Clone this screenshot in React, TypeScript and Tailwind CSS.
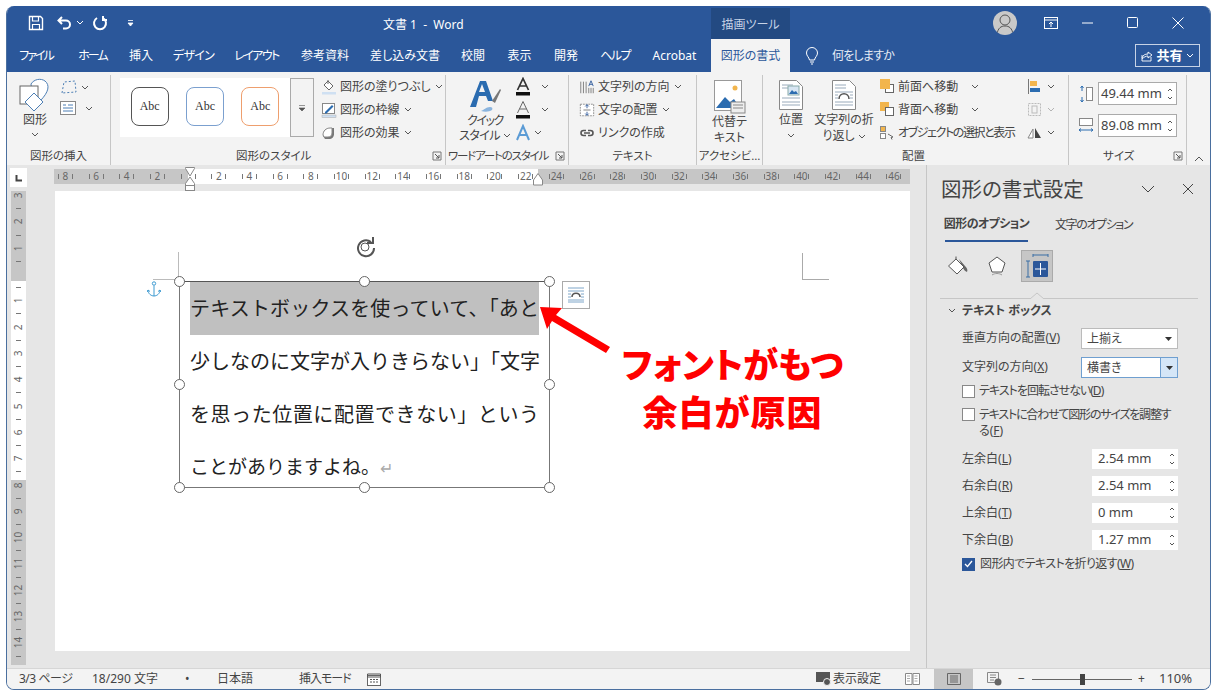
import React from "react";

const Chevron = ({ className = "" }: { className?: string }) => (
  <svg width="8" height="5" viewBox="0 0 8 5" className={`flex-none ${className}`}>
    <path d="M1 1l3 3 3-3" fill="none" stroke="#555" strokeWidth="1" />
  </svg>
);

const Launcher = () => (
  <svg width="10" height="10" viewBox="0 0 10 10" className="flex-none">
    <path d="M1 9V1h8v8z" fill="none" stroke="#777" />
    <path d="M3 3l4 4M7 4v3H4" fill="none" stroke="#555" />
  </svg>
);

const Group = ({
  width,
  label,
  labelClass = "justify-center",
  launcher = false,
  children,
}: {
  width: string;
  label: string;
  labelClass?: string;
  launcher?: boolean;
  children: React.ReactNode;
}) => (
  <div className={`flex flex-none flex-col border-r border-[#c6c6c6] ${width}`}>
    <div className="flex h-[72px] flex-none">{children}</div>
    <div className={`flex h-[18px] items-center whitespace-nowrap text-[11.5px] ${labelClass}`}>
      <span>{label}</span>
      {launcher && (
        <span className="ml-auto mr-[3px]">
          <Launcher />
        </span>
      )}
    </div>
  </div>
);

const Row = ({
  icon,
  label,
  chevron = true,
  className = "",
}: {
  icon: React.ReactNode;
  label: string;
  chevron?: boolean;
  className?: string;
}) => (
  <div className={`flex h-[23px] items-center whitespace-nowrap text-[12px] ${className}`}>
    <span className="mr-[3px] flex w-[16px] flex-none justify-center">{icon}</span>
    <span>{label}</span>
    {chevron && <Chevron className="ml-[4px]" />}
  </div>
);

const Spin = () => (
  <svg width="8" height="14" viewBox="0 0 8 14" className="flex-none">
    <path d="M2 4l2-2 2 2M2 10l2 2 2-2" fill="none" stroke="#555" />
  </svg>
);

const FillIcon = () => (
  <svg width="16" height="16" viewBox="0 0 16 16">
    <path d="M7 2l5 5-4 4-5-5z" fill="#fff" stroke="#666" />
    <path d="M7 1v4" stroke="#666" />
    <rect x="1" y="13" width="14" height="2.5" fill="#cfe0f2" />
  </svg>
);

const PenIcon = () => (
  <svg width="16" height="16" viewBox="0 0 16 16">
    <rect x="1.5" y="1.5" width="12" height="10" fill="#fff" stroke="#888" />
    <path d="M4 10l7-7 1.5 1.5-7 7H4z" fill="#2b6cb0" />
    <rect x="1" y="13" width="14" height="2.5" fill="#cfe0f2" stroke="#aaa" strokeWidth=".5" />
  </svg>
);

const EffectIcon = () => (
  <svg width="16" height="16" viewBox="0 0 16 16">
    <path d="M2 11c0-5 3-8 8-8h3v6c0 3-2 5-5 5H4z" fill="#777" />
    <path d="M2 10c0-4 3-7 7-7h2v5c0 3-2 4-4 4H3z" fill="#fff" stroke="#888" />
  </svg>
);

const TextA = ({ bar, outline = false }: { bar: string; outline?: boolean }) => (
  <svg width="18" height="20" viewBox="0 0 18 20">
    <path
      d="M3.5 13L9 1.5 14.5 13M5.5 9h7"
      fill="none"
      stroke={outline ? "#666" : "#333"}
      strokeWidth={outline ? 1 : 1.7}
    />
    <rect x="2" y="15" width="14" height="3.5" fill={bar} />
  </svg>
);

const DirIcon = () => (
  <svg width="18" height="18" viewBox="0 0 18 18">
    <path d="M2 3v13M5 3v13M8 3v13" stroke="#777" />
    <path d="M11 8l2.5-6L16 8M12 6h3" fill="none" stroke="#2b579a" />
    <path d="M11 10v6M16 10v6M13.500 10v6" stroke="#777" />
  </svg>
);

const AlignIcon = () => (
  <svg width="18" height="18" viewBox="0 0 18 18">
    <rect x="1.500" y="2.500" width="15" height="13" fill="#fff" stroke="#888" strokeDasharray="2 1" />
    <path d="M9 3v4M7 5l2-2 2 2M9 15v-4M7 13l2 2 2-2" fill="none" stroke="#2b579a" />
    <path d="M5 9h8" stroke="#777" />
  </svg>
);

const LinkIcon = () => (
  <svg width="16" height="10" viewBox="0 0 16 10">
    <path d="M7 2.500H4.500a2.500 2.500 0 000 5H7M9 2.500h2.500a2.500 2.500 0 010 5H9M5 5h6" fill="none" stroke="#555" strokeWidth="1.600" />
  </svg>
);

const PageIcon = ({ wrap = false }: { wrap?: boolean }) => (
  <svg width="24" height="30" viewBox="0 0 24 30">
    <path d="M.5.500h17l6 6v23H.5z" fill="#fff" stroke="#888" />
    <path d="M3 5h11M3 8h11M3 25h18M3 22h18" stroke="#9ab" />
    {wrap ? (
      <>
        <path d="M3 12h18M3 15h3M18 15h3M3 18h3M18 18h3" stroke="#9ab" />
        <path d="M7 19c0-7 10-7 10 0" fill="none" stroke="#555" strokeWidth="1.500" />
      </>
    ) : (
      <>
        <rect x="9" y="6" width="11" height="9" fill="#d8e6f3" stroke="#8aa" />
        <path d="M10 14l3-4 2 2 2-1 2 3z" fill="#2b6cb0" />
        <path d="M3 18h18" stroke="#9ab" />
      </>
    )}
  </svg>
);

const FrontIcon = ({ back = false }: { back?: boolean }) => (
  <svg width="15" height="15" viewBox="0 0 15 15" className="flex-none">
    {back ? (
      <>
        <rect x="0" y="0" width="9" height="9" fill="#f2b54d" />
        <rect x="5.500" y="5.500" width="8" height="8" fill="#fff" stroke="#666" />
      </>
    ) : (
      <>
        <rect x="5.500" y="5.500" width="8" height="8" fill="#fff" stroke="#666" />
        <rect x="0" y="0" width="10" height="10" fill="#f2b54d" />
      </>
    )}
  </svg>
);

const Section = () => (
  <svg width="15" height="15" viewBox="0 0 15 15" className="flex-none">
    <rect x=".5" y="1.500" width="5" height="5" fill="#f2b54d" stroke="#888" />
    <rect x=".5" y="8.500" width="5" height="5" fill="#fff" stroke="#888" />
    <path d="M8 9l5 3-2 .5 1 2" fill="#fff" stroke="#666" />
  </svg>
);

const HandleDot = ({ className }: { className: string }) => (
  <div className={`absolute h-[11px] w-[11px] rounded-full border-[1.5px] border-[#666] bg-white ${className}`} />
);

const Pane = ({ children }: { children: React.ReactNode }) => (
  <div className="flex h-[20px] w-[216px] items-center justify-between">{children}</div>
);

const NumField = ({ label, u, tail, value }: { label: string; u: string; tail: string; value: string }) => (
  <div className="mt-[7px] ml-[35px]">
    <Pane>
      <span className="whitespace-nowrap text-[12px]">
        {label}(<span className="underline">{u}</span>){tail}
      </span>
      <span className="flex h-[20px] w-[86px] items-center justify-between bg-white pl-[6px] pr-[2px] text-[13px]">
        {value}
        <Spin />
      </span>
    </Pane>
  </div>
);

const hTicks: (number | null)[] = [8, 6, 4, 2, null];
for (let n = 2; n <= 46; n += 2) hTicks.push(n);

const vCells: (number | null | "t")[] = [];
for (let n = -3; n <= 14; n++) {
  vCells.push(n === 0 ? null : Math.abs(n));
  vCells.push("t");
}

const tabs = [
  { t: "ファイル", w: "w-[34px] mr-[3px] tracking-[-2px]" },
  { t: "ホーム", w: "w-[29px] tracking-[-2px]" },
  { t: "挿入", w: "w-[24px]" },
  { t: "デザイン", w: "w-[37px] tracking-[-0.7px]" },
  { t: "レイアウト", w: "w-[45px] tracking-[-1.6px]" },
  { t: "参考資料", w: "w-[48px]" },
  { t: "差し込み文書", w: "w-[68px]" },
  { t: "校閲", w: "w-[24px]" },
  { t: "表示", w: "w-[25px]" },
  { t: "開発", w: "w-[24px]" },
  { t: "ヘルプ", w: "w-[30px] tracking-[-1.6px]" },
  { t: "Acrobat", w: "w-[45px]" },
];

const App: React.FC = () => {
  return (
    <div className="h-[698px] w-[1218px] overflow-hidden bg-white pl-[6px] pt-[6px] font-['Noto_Sans','Noto_Sans_CJK_JP',sans-serif] text-[#444] [font-feature-settings:'palt']">
      <div className="flex h-[684px] w-[1205px] flex-col overflow-hidden rounded-t-[8px] rounded-b-[8px] border-x border-b border-[#4a6f9f] bg-[#e6e6e6]">
        {/* title bar */}
        <div className="flex h-[33px] flex-none items-center bg-[#2b579a] text-white">
          <svg width="16" height="16" viewBox="0 0 16 16" className="ml-[21px] flex-none">
            <path d="M1.500 1.500h11l2 2v11h-13z" fill="none" stroke="#fff" strokeWidth="1.400" />
            <path d="M4.500 2v4h6V2M4.500 14V9.500h7V14" fill="none" stroke="#fff" strokeWidth="1.200" />
          </svg>
          <svg width="18" height="16" viewBox="0 0 18 16" className="ml-[12px] flex-none">
            <path d="M6 2L2.500 5.500 6 9M3 5.500h7a4 4 0 010 8H7" fill="none" stroke="#fff" strokeWidth="2" />
          </svg>
          <svg width="8" height="5" viewBox="0 0 8 5" className="ml-[2px] flex-none">
            <path d="M1 1l3 3 3-3" fill="none" stroke="#fff" />
          </svg>
          <svg width="16" height="16" viewBox="0 0 16 16" className="ml-[8px] flex-none">
            <path d="M5 3a6 6 0 106 0M11 1v4h4" fill="none" stroke="#fff" strokeWidth="2" />
          </svg>
          <svg width="7" height="8" viewBox="0 0 7 8" className="ml-[19px] flex-none">
            <path d="M1 1.500h5M1 4l2.500 3L6 4z" fill="#fff" stroke="#fff" strokeWidth=".8" />
          </svg>
          <span className="ml-[249px] mt-[5px] w-[88px] flex-none whitespace-nowrap text-[12px]">文書 1 &nbsp;-&nbsp; Word</span>
          <div className="ml-[240px] mt-[2px] flex h-[31px] w-[79px] flex-none items-center justify-center bg-[#234a82] pt-[2px] text-[12px] text-[#c7d3e6]">
            描画ツール
          </div>
          <div className="ml-[203px] flex h-[24px] w-[24px] flex-none items-center justify-center overflow-hidden rounded-full bg-[#c9c9c9]">
            <svg width="20" height="22" viewBox="0 0 20 22">
              <circle cx="10" cy="8" r="5" fill="none" stroke="#555" />
              <path d="M2 22c1-6 4-8 8-8s7 2 8 8" fill="none" stroke="#555" />
            </svg>
          </div>
          <svg width="14" height="12" viewBox="0 0 14 12" className="ml-[27px] flex-none">
            <rect x=".5" y=".5" width="13" height="11" fill="none" stroke="#fff" />
            <path d="M.5 3h13M7 10V5M5 7l2-2 2 2" fill="none" stroke="#fff" />
          </svg>
          <svg width="11" height="2" viewBox="0 0 11 2" className="ml-[24px] flex-none">
            <path d="M0 1h11" stroke="#fff" />
          </svg>
          <svg width="11" height="11" viewBox="0 0 11 11" className="ml-[34px] flex-none">
            <rect x=".5" y=".5" width="10" height="10" rx="1" fill="none" stroke="#fff" />
          </svg>
          <svg width="12" height="12" viewBox="0 0 12 12" className="ml-[34px] flex-none">
            <path d="M.5.500l11 11M11.500.500l-11 11" stroke="#fff" />
          </svg>
        </div>

        {/* tabs */}
        <div className="flex h-[33px] flex-none items-center bg-[#2b579a] pl-[12px] text-[12px] text-white">
          <div className="flex gap-[22px]">
            {tabs.map((tab) => (
              <span key={tab.t} className={`flex flex-none justify-center whitespace-nowrap ${tab.w}`}>
                {tab.t}
              </span>
            ))}
          </div>
          <div className="ml-[14px] flex h-full w-[79px] flex-none items-center justify-center bg-[#f3f3f3] text-[#2b579a]">
            図形の書式
          </div>
          <svg width="14" height="18" viewBox="0 0 14 18" className="ml-[15px] flex-none">
            <path d="M4.500 13C4 10 1.500 9 1.500 6a5.500 5.500 0 0111 0c0 3-2.500 4-3 7zM5 15h4M6 17h2" fill="none" stroke="#fff" />
          </svg>
          <span className="ml-[13px] w-[57px] flex-none whitespace-nowrap tracking-[-0.8px] text-[#e6ecf5]">何をしますか</span>
          <div className="ml-[246px] flex h-[23px] w-[65px] flex-none items-center justify-center gap-[3px] border border-[#c7d3e6] text-[13px] font-bold">
            <svg width="12" height="12" viewBox="0 0 12 12" className="flex-none">
              <path d="M1 5v6h9V7M1 8c1-3 3-4 6-4V2l4 3-4 3V6C5 6 3 7 1 9" fill="none" stroke="#fff" strokeWidth=".9" />
            </svg>
            共有
            <svg width="8" height="5" viewBox="0 0 8 5" className="flex-none">
              <path d="M1 1l3 3 3-3" fill="none" stroke="#fff" />
            </svg>
          </div>
        </div>

        {/* ribbon */}
        <div className="flex h-[93px] flex-none items-start bg-[#f3f3f3] pt-[3px]">
          <Group width="w-[104px]" label="図形の挿入">
            <div className="flex w-[46px] flex-none flex-col items-center pl-[10px] pt-[3px] text-[12px]">
              <svg width="32" height="36" viewBox="0 0 32 36" className="flex-none">
                <path d="M12 6c3-5 10-6 14-3 5 4 4 11-5 20l-8-8z" fill="#fff" stroke="#4d7fb5" />
                <rect x="1" y="8" width="18" height="18" fill="#fff" stroke="#666" />
                <path d="M15 15l9 9-9 9-9-9z" fill="#fff" stroke="#4d7fb5" />
              </svg>
              <span className="-mt-[1px] whitespace-nowrap leading-[14px]">図形</span>
              <Chevron className="mt-[5px]" />
            </div>
            <div className="ml-[7px] flex flex-col gap-[5px] pt-[4px]">
              <div className="flex items-center gap-[3px]">
                <svg width="18" height="17" viewBox="0 0 18 17">
                  <path d="M2 14L4 3l11-1 1 11z" fill="none" stroke="#4d7fb5" strokeDasharray="2 2" />
                </svg>
                <Chevron />
              </div>
              <div className="flex items-center gap-[9px]">
                <svg width="16" height="14" viewBox="0 0 16 14">
                  <rect x=".5" y=".5" width="15" height="13" fill="#fff" stroke="#888" />
                  <path d="M3 4h3M8 4h5M3 7h10M3 10h10" stroke="#4d7fb5" />
                </svg>
                <Chevron />
              </div>
            </div>
          </Group>

          <Group width="w-[335px]" label="図形のスタイル" labelClass="pl-[125px]" launcher>
            <div className="ml-[9px] mt-[3px] flex h-[59px] flex-none">
              <div className="flex w-[170px] items-start justify-around bg-white px-[2px] pt-[9px] font-['Liberation_Serif',serif] text-[12px] text-[#333]">
                <span className="flex h-[39px] w-[38px] items-center justify-center rounded-[8px] border-[1.5px] border-[#555] pb-[2px]">Abc</span>
                <span className="flex h-[39px] w-[38px] items-center justify-center rounded-[8px] border-[1.5px] border-[#7ba0cf] pb-[2px]">Abc</span>
                <span className="flex h-[39px] w-[38px] items-center justify-center rounded-[8px] border-[1.5px] border-[#ee9f6e] pb-[2px]">Abc</span>
              </div>
              <div className="flex w-[24px] items-center justify-center border border-[#aaa] bg-[#f3f3f3]">
                <svg width="8" height="8" viewBox="0 0 8 8">
                  <path d="M1 1.500h6M1 4l3 3 3-3z" fill="#555" stroke="#555" strokeWidth=".6" />
                </svg>
              </div>
            </div>
            <div className="ml-[7px] flex flex-col pt-[0px]">
              <Row icon={<FillIcon />} label="図形の塗りつぶし" />
              <Row icon={<PenIcon />} label="図形の枠線" />
              <Row icon={<EffectIcon />} label="図形の効果" />
            </div>
          </Group>

          <Group width="w-[123px]" label="ワードアートのスタイル" labelClass="pl-[2px] tracking-[-1.2px]" launcher>
            <div className="ml-[14px] flex w-[50px] flex-none flex-col items-center pt-[4px] text-[12px] leading-[15px]">
              <svg width="36" height="36" viewBox="0 0 36 36" className="flex-none">
                <path d="M3 28L13 2h6l7 20h-5l-2-5h-7l-3 11zM12 13h6l-3-8z" fill="#2b6cb0" />
                <path d="M25 22l8-12 1 1-6 13z" fill="#777" />
                <path d="M14 32c3-1 5-4 9-4 2 0 3 1 2 3-3 2-7 2-11 1z" fill="#8ab4de" />
              </svg>
              <span className="-mt-[2px] whitespace-nowrap tracking-[-1.5px]">クイック</span>
              <span className="flex items-center gap-[3px] whitespace-nowrap tracking-[-0.6px]">
                スタイル <Chevron />
              </span>
            </div>
            <div className="ml-[4px] flex flex-col">
              <div className="flex h-[23px] items-center gap-[9px]"><TextA bar="#111" /><Chevron /></div>
              <div className="flex h-[23px] items-center gap-[9px]"><TextA bar="#111" outline /><Chevron /></div>
              <div className="flex h-[23px] items-center gap-[2px]">
                <svg width="18" height="18" viewBox="0 0 18 18">
                  <path d="M3 16L9 2l6 14M6 11h6" fill="none" stroke="#5b9bd5" strokeWidth="2" />
                </svg>
                <Chevron />
              </div>
            </div>
          </Group>

          <Group width="w-[128px]" label="テキスト">
            <div className="ml-[10px] flex flex-col">
              <Row icon={<DirIcon />} label="文字列の方向" />
              <Row icon={<AlignIcon />} label="文字の配置" />
              <Row icon={<LinkIcon />} label="リンクの作成" chevron={false} />
            </div>
          </Group>

          <Group width="w-[66px]" label="アクセシビ…">
            <div className="flex w-full flex-col items-center pt-[5px] text-[12px] leading-[16px]">
              <svg width="32" height="36" viewBox="0 0 32 36" className="flex-none">
                <rect x=".5" y=".5" width="27" height="30" fill="#fff" stroke="#999" />
                <circle cx="21" cy="8" r="2.500" fill="#f2b54d" />
                <path d="M2 28l9-11 5 5 4-3 6 9z" fill="#2b6cb0" />
                <rect x="17" y="22" width="14" height="11" fill="#eee" stroke="#888" />
                <path d="M19 25h10M19 28h10" stroke="#888" />
              </svg>
              <span className="-mt-[2px] whitespace-nowrap">代替テ</span>
              <span className="whitespace-nowrap">キスト</span>
            </div>
          </Group>

          <Group width="w-[306px]" label="配置" labelClass="justify-center pr-[4px]">
            <div className="ml-[8px] flex w-[40px] flex-none flex-col items-center pt-[5px] text-[12px]">
              <PageIcon />
              <span className="mt-[2px] whitespace-nowrap leading-[16px]">位置</span>
              <Chevron className="mt-[5px]" />
            </div>
            <div className="ml-[4px] flex w-[58px] flex-none flex-col items-center pt-[5px] text-[12px] leading-[16px]">
              <PageIcon wrap />
              <span className="mt-[2px] whitespace-nowrap">文字列の折</span>
              <span className="flex items-center gap-[3px] whitespace-nowrap">
                り返し <Chevron />
              </span>
            </div>
            <div className="ml-[7px] flex w-[134px] flex-none flex-col">
              <div className="flex h-[23px] items-center whitespace-nowrap text-[12px]">
                <FrontIcon />
                <span className="ml-[3px] w-[73px] flex-none">前面へ移動</span>
                <Chevron />
              </div>
              <div className="flex h-[23px] items-center whitespace-nowrap text-[12px]">
                <FrontIcon back />
                <span className="ml-[3px] w-[73px] flex-none">背面へ移動</span>
                <Chevron />
              </div>
              <div className="flex h-[23px] items-center whitespace-nowrap text-[12px]">
                <Section />
                <span className="ml-[3px] tracking-[-1.4px]">オブジェクトの選択と表示</span>
              </div>
            </div>
            <div className="ml-[13px] flex flex-col">
              <div className="flex h-[23px] items-center gap-[5px]">
                <svg width="15" height="15" viewBox="0 0 15 15">
                  <path d="M1.500 0v15" stroke="#777" />
                  <rect x="3" y="2" width="7" height="5" fill="#f2b54d" />
                  <rect x="3" y="9" width="10" height="4" fill="#2b6cb0" />
                </svg>
                <Chevron />
              </div>
              <div className="flex h-[23px] items-center gap-[5px]">
                <svg width="15" height="15" viewBox="0 0 15 15">
                  <rect x="1.500" y="1.500" width="12" height="12" fill="none" stroke="#bbb" strokeDasharray="2 1" />
                  <rect x="5" y="4" width="5" height="7" fill="none" stroke="#bbb" />
                </svg>
                <Chevron className="opacity-40" />
              </div>
              <div className="flex h-[23px] items-center gap-[5px]">
                <svg width="15" height="15" viewBox="0 0 15 15">
                  <path d="M6 13H1l5-9z" fill="#fff" stroke="#888" />
                  <path d="M8 13h6L8 3z" fill="#444" />
                </svg>
                <Chevron />
              </div>
            </div>
          </Group>

          <Group width="w-[118px]" label="サイズ" labelClass="pl-[34px]" launcher>
            <div className="ml-[9px] flex flex-col gap-[9px] pt-[7px]">
              <div className="flex items-center gap-[4px]">
                <svg width="16" height="20" viewBox="0 0 16 20" className="flex-none">
                  <rect x="8.500" y="3.500" width="6" height="13" fill="#fff" stroke="#888" />
                  <path d="M4 2v5M2.500 4L4 2l1.500 2M4 18v-5M2.500 16L4 18l1.500-2" fill="none" stroke="#2b6cb0" />
                </svg>
                <div className="flex h-[23px] w-[79px] items-center justify-between border border-[#aaa] bg-white pl-[2px] pr-[2px] text-[13px] whitespace-nowrap">
                  49.44 mm
                  <Spin />
                </div>
              </div>
              <div className="flex items-center gap-[4px]">
                <svg width="16" height="20" viewBox="0 0 16 20" className="flex-none">
                  <rect x="1.500" y="2.500" width="13" height="7" fill="#fff" stroke="#888" />
                  <path d="M1 14h14M1 14l2-1.500M1 14l2 1.500M15 14l-2-1.500M15 14l-2 1.500" fill="none" stroke="#2b6cb0" />
                </svg>
                <div className="flex h-[23px] w-[79px] items-center justify-between border border-[#aaa] bg-white pl-[2px] pr-[2px] text-[13px] whitespace-nowrap">
                  89.08 mm
                  <Spin />
                </div>
              </div>
            </div>
          </Group>
          <div className="flex h-[90px] flex-1 items-end justify-center pb-[3px]">
            <svg width="10" height="6" viewBox="0 0 10 6">
              <path d="M1 5l4-4 4 4" fill="none" stroke="#555" />
            </svg>
          </div>
        </div>

        {/* work area */}
        <div className="flex min-h-0 flex-1">
          <div className="w-[920px] flex-none border-r border-[#c6c6c6]">
            <div className="relative flex items-start pt-[3px]">
              <div className="ml-[3px] flex h-[19px] w-[17px] flex-none items-center justify-center bg-white">
                <svg width="8" height="8" viewBox="0 0 8 8">
                  <path d="M1.500 1v5.500H7" fill="none" stroke="#444" strokeWidth="2" />
                </svg>
              </div>
              <div className="ml-[27px] mt-[1px] flex h-[15px] w-[856px] flex-none items-center overflow-hidden bg-[linear-gradient(to_right,#c6c6c6_134px,#fff_134px,#fff_484px,#c6c6c6_484px)] text-[10px] text-[#666]">
                <div className="-ml-[4px] flex flex-none">
                  {hTicks.map((n, i) => (
                    <div key={i} className="flex w-[30.7px] flex-none justify-center">
                      <div className="flex w-[15px] items-center justify-between">
                        <span className="h-[5px] w-[1px] flex-none bg-[#777]" />
                        <span className="flex w-0 justify-center">{n}</span>
                        <span className="h-[5px] w-[1px] flex-none bg-[#777]" />
                      </div>
                    </div>
                  ))}
                </div>
              </div>
              {/* indent markers */}
              <svg width="10" height="24" viewBox="0 0 10 24" className="absolute left-[178px] top-[2px]">
                <path d="M.5.500h9v1L5 9 .5 1.500z" fill="#fff" stroke="#888" />
                <path d="M5 10l4.500 6.500v2h-9v-2z" fill="#fff" stroke="#888" />
                <rect x=".5" y="18.500" width="9" height="5" fill="#fff" stroke="#888" />
              </svg>
              <svg width="10" height="13" viewBox="0 0 10 13" className="absolute left-[526px] top-[8px]">
                <path d="M5 .5l4.500 6.500v5h-9V7z" fill="#fff" stroke="#888" />
              </svg>
            </div>
            <div className="mt-[4px] flex items-start">
              <div className="ml-[4px] flex h-[474px] w-[15px] flex-none flex-col items-center overflow-hidden bg-[linear-gradient(to_bottom,#c6c6c6_90px,#fff_90px,#fff_289px,#c6c6c6_289px)] text-[10px] text-[#666]">
                <div className="-mt-[2px] flex flex-col items-center">
                  {vCells.map((c, i) => (
                    <div key={i} className="flex h-[13.17px] w-[15px] flex-none items-center justify-center">
                      {c === "t" ? (
                        <span className="h-[1px] w-[5px] bg-[#777]" />
                      ) : (
                        <span className="-rotate-90 whitespace-nowrap">{c}</span>
                      )}
                    </div>
                  ))}
                </div>
              </div>
              <div className="relative ml-[29px] h-[460px] w-[855px] flex-none bg-white">
                {/* crop marks */}
                <div className="absolute left-[747px] top-[62px] h-[27px] w-[27px] border-b border-l border-[#aaa]" />
                <div className="absolute left-[123px] top-[61px] h-[27px] w-[1px] bg-[#bbb]" />
                <div className="absolute left-[98px] top-[88px] h-[1px] w-[26px] bg-[#bbb]" />
                {/* anchor */}
                <svg width="14" height="16" viewBox="0 0 14 16" className="absolute left-[92px] top-[90px]">
                  <circle cx="7" cy="2.500" r="1.700" fill="none" stroke="#3d9ad1" />
                  <path d="M7 4.500V15M1 9c0 3.500 3 6 6 6s6-2.500 6-6M1 9l-.8 2M1 9l2 1.500M13 9l.8 2M13 9l-2 1.500" fill="none" stroke="#3d9ad1" />
                </svg>
                {/* rotate handle */}
                <svg width="24" height="24" viewBox="0 0 24 24" className="absolute left-[298px] top-[44px]">
                  <path d="M18 7a8 8 0 10 3 6" fill="none" stroke="#555" strokeWidth="2" />
                  <path d="M20 2v6h-6" fill="none" stroke="#555" strokeWidth="2" />
                  <circle cx="12" cy="12" r="4" fill="none" stroke="#555" />
                </svg>
                {/* text box */}
                <div className="absolute left-[124px] top-[90px] h-[207px] w-[371px] border border-[#777] border-t-[#555] px-[10px] text-[20px] leading-[53px] text-[#222] [font-feature-settings:normal]">
                  <div className="w-[349px] bg-[#c0c0c0] [text-align-last:justify] whitespace-nowrap">テキストボックスを使っていて、「あと</div>
                  <div className="w-[349px] [text-align-last:justify] whitespace-nowrap">少しなのに文字が入りきらない」「文字</div>
                  <div className="w-[349px] [text-align-last:justify] whitespace-nowrap">を思った位置に配置できない」という</div>
                  <div className="w-[349px] whitespace-nowrap text-[19px]">
                    ことがありますよね。<span className="text-[16px] text-[#aaa]">↵</span>
                  </div>
                  <HandleDot className="-left-[6px] -top-[6px]" />
                  <HandleDot className="left-[179px] -top-[6px]" />
                  <HandleDot className="-right-[6px] -top-[6px]" />
                  <HandleDot className="-left-[6px] top-[97px]" />
                  <HandleDot className="-right-[6px] top-[97px]" />
                  <HandleDot className="-left-[6px] -bottom-[6px]" />
                  <HandleDot className="left-[179px] -bottom-[6px]" />
                  <HandleDot className="-right-[6px] -bottom-[6px]" />
                </div>
                {/* layout options */}
                <div className="absolute left-[507px] top-[90px] flex h-[28px] w-[28px] items-center justify-center border border-[#aaa] bg-white">
                  <svg width="18" height="18" viewBox="0 0 18 18">
                    <path d="M1 2h16M1 5h16M1 8h3M14 8h3M1 11h3M14 11h3M1 14h16M1 16h16" stroke="#7fa6c9" />
                    <path d="M5 11c0-5 8-5 8 0" fill="none" stroke="#555" strokeWidth="1.500" />
                  </svg>
                </div>
                {/* arrow */}
                <svg width="80" height="50" viewBox="0 0 80 50" className="absolute left-[482px] top-[112px]">
                  <path d="M3 4l22 1-6 7 54 32-4 6-54-32-5 8z" fill="#f00" />
                </svg>
                {/* callout */}
                <div className="absolute left-[568px] top-[150px] flex w-[219px] flex-col items-center whitespace-nowrap text-[35px] font-black leading-[48px] text-[#f00]">
                  <span>フォントがもつ</span>
                  <span className="tracking-[1px] [font-feature-settings:normal]">余白が原因</span>
                </div>
              </div>
            </div>
          </div>

          {/* format pane */}
          <div className="min-w-0 flex-1">
            <div className="flex h-[48px] items-center pl-[14px] text-[20.5px] text-[#444]">
              <span className="w-[200px] flex-none whitespace-nowrap">図形の書式設定</span>
              <svg width="14" height="8" viewBox="0 0 14 8" className="flex-none">
                <path d="M1 1l6 6 6-6" fill="none" stroke="#444" />
              </svg>
              <svg width="12" height="12" viewBox="0 0 12 12" className="ml-[27px] flex-none">
                <path d="M1 1l10 10M11 1L1 11" stroke="#444" />
              </svg>
            </div>
            <div className="flex h-[30px] pl-[18px] text-[12px]">
              <span className="flex h-[29px] w-[83px] flex-none items-center justify-center whitespace-nowrap border-b-2 border-[#2b579a] pb-[6px] font-bold tracking-[-0.6px]">
                図形のオプション
              </span>
              <span className="ml-[27px] flex h-[24px] items-center whitespace-nowrap tracking-[-1.4px]">文字のオプション</span>
            </div>
            <div className="mt-[7px] flex h-[32px] items-center pl-[20px]">
              <svg width="22" height="22" viewBox="0 0 22 22" className="flex-none">
                <path d="M9 1.500v4" stroke="#555" />
                <path d="M12 4l6 7c2 2 3 4 2 6-2-1-3-2-4-4z" fill="#666" />
                <path d="M1.500 11L9 4l8 8-7 7z" fill="#fff" stroke="#555" />
              </svg>
              <svg width="20" height="22" viewBox="0 0 20 22" className="ml-[18px] flex-none">
                <path d="M10 2l8 6-3 9H5L2 8z" fill="#fff" stroke="#555" />
                <path d="M5 20c3-2 7-2 10 0" fill="none" stroke="#999" />
              </svg>
              <div className="ml-[14px] flex h-[32px] w-[32px] items-center justify-center border border-[#aaa] bg-[#c6c6c6]">
                <svg width="26" height="26" viewBox="0 0 26 26">
                  <path d="M9 2h15M9 1v3M24 1v3M2 8h4M4 8v16M2 24h4" fill="none" stroke="#3a6ea5" />
                  <rect x="9" y="8" width="15" height="16" rx="1" fill="#2b579a" />
                  <path d="M16.500 10v12M11 16h11" stroke="#fff" />
                </svg>
              </div>
            </div>
            <div className="relative mt-[16px] ml-[13px] h-[1px] w-[258px] bg-[#c6c6c6]">
              <svg width="14" height="7" viewBox="0 0 14 7" className="absolute left-[90px] -top-[6px]">
                <path d="M0 7l7-6 7 6" fill="#e6e6e6" stroke="#c6c6c6" />
              </svg>
            </div>
            <div className="flex h-[23px] items-center pl-[21px] text-[12px] font-bold">
              <Chevron />
              <span className="ml-[6px] whitespace-nowrap">テキスト ボックス</span>
            </div>
            <div className="ml-[35px] mt-[6px] flex h-[21px] w-[216px] items-center justify-between text-[12px]">
              <span className="-mt-[2px] whitespace-nowrap">垂直方向の配置(<span className="underline">V</span>)</span>
              <span className="flex h-[21px] w-[97px] items-center justify-between border border-[#bbb] bg-white pl-[5px] pr-[5px]">
                上揃え
                <svg width="7" height="4" viewBox="0 0 7 4"><path d="M0 0h7L3.500 4z" fill="#333" /></svg>
              </span>
            </div>
            <div className="ml-[35px] mt-[8px] flex h-[21px] w-[216px] items-center justify-between text-[12px]">
              <span className="-mt-[2px] whitespace-nowrap">文字列の方向(<span className="underline">X</span>)</span>
              <span className="flex h-[21px] w-[97px] items-center justify-between border border-[#6f9fd0] bg-white pl-[5px]">
                横書き
                <span className="flex h-full w-[17px] items-center justify-center border-l border-[#6f9fd0] bg-[#d5e6f7]">
                  <svg width="7" height="4" viewBox="0 0 7 4"><path d="M0 0h7L3.500 4z" fill="#333" /></svg>
                </span>
              </span>
            </div>
            <div className="ml-[35px] mt-[5px] flex h-[16px] items-center text-[12px]">
              <span className="h-[13px] w-[13px] flex-none border border-[#888] bg-white" />
              <span className="ml-[4px] whitespace-nowrap tracking-[-1px]">テキストを回転させない(<span className="underline">D</span>)</span>
            </div>
            <div className="ml-[35px] mt-[8px] flex items-start text-[12px] leading-[16px]">
              <span className="mt-[1px] h-[13px] w-[13px] flex-none border border-[#888] bg-white" />
              <span className="ml-[4px]">
                <span className="block whitespace-nowrap tracking-[-1.2px]">テキストに合わせて図形のサイズを調整す</span>
                <span className="block">る(<span className="underline">F</span>)</span>
              </span>
            </div>
            <div className="mt-[10px]">
              <NumField label="左余白" u="L" tail="" value="2.54 mm" />
              <NumField label="右余白" u="R" tail="" value="2.54 mm" />
              <NumField label="上余白" u="T" tail="" value="0 mm" />
              <NumField label="下余白" u="B" tail="" value="1.27 mm" />
            </div>
            <div className="ml-[35px] mt-[6px] flex h-[16px] items-center text-[12px]">
              <span className="flex h-[13px] w-[13px] flex-none items-center justify-center bg-[#2b579a]">
                <svg width="9" height="8" viewBox="0 0 9 8"><path d="M1 4l2.500 2.500L8 1" fill="none" stroke="#fff" strokeWidth="1.300" /></svg>
              </span>
              <span className="ml-[5px] whitespace-nowrap tracking-[-0.6px]">図形内でテキストを折り返す(<span className="underline">W</span>)</span>
            </div>
          </div>
        </div>

        {/* status bar */}
        <div className="flex h-[21px] flex-none items-center border-t border-[#d6d6d6] bg-[#f3f3f3] pl-[12px] text-[12px]">
          <span className="w-[73px] flex-none whitespace-nowrap tracking-[-0.5px]">3/3 ページ</span>
          <span className="w-[93px] flex-none whitespace-nowrap">18/290 文字</span>
          <span className="w-[32px] flex-none whitespace-nowrap">•</span>
          <span className="w-[82px] flex-none whitespace-nowrap">日本語</span>
          <span className="w-[68px] flex-none whitespace-nowrap tracking-[-1px]">挿入モード</span>
          <svg width="14" height="13" viewBox="0 0 14 13" className="flex-none">
            <rect x=".5" y="2.500" width="13" height="10" fill="#fff" stroke="#666" />
            <path d="M.5 1h13v3H.5zM3 6.500h2M6 6.500h2M9 6.500h2M3 9h2M6 9h2M9 9h2" fill="none" stroke="#555" />
          </svg>
          <svg width="16" height="14" viewBox="0 0 16 14" className="ml-[435px] flex-none">
            <rect x="0" y="0" width="14" height="10" fill="#555" />
            <circle cx="11" cy="10" r="3.500" fill="#555" stroke="#f3f3f3" />
          </svg>
          <span className="ml-[1px] w-[72px] flex-none whitespace-nowrap">表示設定</span>
          <svg width="15" height="12" viewBox="0 0 15 12" className="flex-none">
            <path d="M.5.500h6.500v11H.5zM8 .500h6.500v11H8z" fill="#fff" stroke="#888" />
            <path d="M2 3h3M2 5.500h3M2 8h3M9.500 3h3M9.500 5.500h3M9.500 8h3" stroke="#aaa" />
          </svg>
          <div className="ml-[14px] flex h-full w-[39px] flex-none items-center justify-center bg-[#c6c6c6]">
            <svg width="14" height="12" viewBox="0 0 14 12">
              <path d="M.5.500h13v11H.5zM3 3h8M3 5h8M3 7h8M3 9h8" fill="none" stroke="#666" />
            </svg>
          </div>
          <svg width="15" height="14" viewBox="0 0 15 14" className="ml-[14px] flex-none">
            <path d="M.5.500h11v10H.5zM3 3h6M3 5.500h6M3 8h4" fill="none" stroke="#888" />
            <circle cx="11" cy="10" r="3.500" fill="#666" />
          </svg>
          <span className="ml-[16px] w-[14px] flex-none">−</span>
          <div className="relative flex h-[1px] w-[100px] flex-none justify-center bg-[#666]">
            <span className="-mt-[5px] h-[11px] w-[5px] flex-none bg-[#444]" />
          </div>
          <span className="ml-[6px] w-[21px] flex-none">+</span>
          <span className="whitespace-nowrap text-[13px]">110%</span>
        </div>
      </div>
    </div>
  );
};

export default App;
